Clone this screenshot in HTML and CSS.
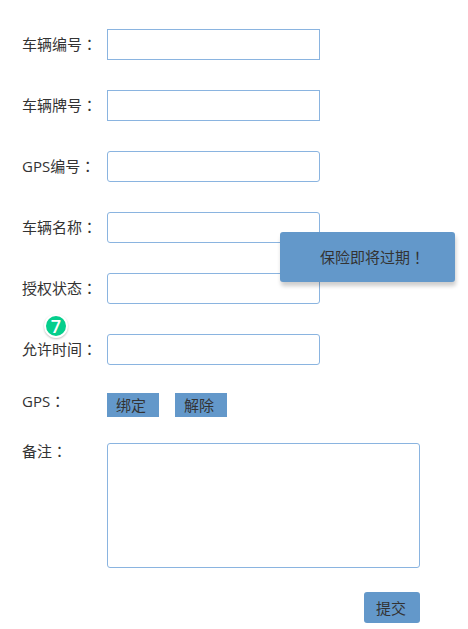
FILE: index.html
```html
<!DOCTYPE html>
<html lang="zh-CN">
<head>
<meta charset="utf-8">
<meta name="viewport" content="width=device-width, initial-scale=1">
<title>车辆信息</title>
<link rel="stylesheet" href="styles.css">
</head>
<body>
<form class="form">
  <div class="row">
    <label class="label" for="car-id">车辆编号<span class="mark" lang="zh-TW">：</span></label>
    <input class="field square" id="car-id" type="text">
  </div>
  <div class="row">
    <label class="label" for="plate">车辆牌号<span class="mark" lang="zh-TW">：</span></label>
    <input class="field square" id="plate" type="text">
  </div>
  <div class="row">
    <label class="label" for="gps-id">GPS编号<span class="mark" lang="zh-TW">：</span></label>
    <input class="field" id="gps-id" type="text">
  </div>
  <div class="row">
    <label class="label" for="car-name">车辆名称<span class="mark" lang="zh-TW">：</span></label>
    <input class="field" id="car-name" type="text">
  </div>
  <div class="row">
    <label class="label" for="auth">授权状态<span class="mark" lang="zh-TW">：</span></label>
    <input class="field" id="auth" type="text">
  </div>
  <div class="row">
    <label class="label" for="time">允许时间<span class="mark" lang="zh-TW">：</span></label>
    <input class="field" id="time" type="text">
    <span class="badge">7</span>
  </div>
  <div class="row top" role="group" aria-labelledby="gps">
    <span class="label" id="gps">GPS<span class="mark" lang="zh-TW">：</span></span>
    <div class="actions">
      <button class="button small" type="button">绑定</button>
      <button class="button small" type="button">解除</button>
    </div>
  </div>
  <div class="row top">
    <label class="label" for="note">备注<span class="mark" lang="zh-TW">：</span></label>
    <textarea class="field note" id="note"></textarea>
  </div>
  <div class="footer">
    <button class="button submit" type="submit">提交</button>
  </div>
</form>
<div class="toast" role="alert">保险即将过期<span class="mark" lang="zh-TW">！</span></div>
</body>
</html>
```

FILE: styles.css
```css
* {
  box-sizing: border-box;
}

body {
  position: relative;
  margin: 0;
  background: #fff;
  color: #333;
  font: 15px/20px "Open Sans", "Noto Sans CJK SC", sans-serif;
}

.form {
  display: flex;
  flex-direction: column;
  padding: 29px 48px 0 22px;
}

.row {
  position: relative;
  display: grid;
  grid-template-columns: 85px 1fr;
  align-items: center;
  margin-bottom: 30px;
}

.row.top {
  align-items: start;
  margin-bottom: 26px;
}

.row:has(.badge) {
  margin-bottom: 28px;
}

.row:has(.note) {
  margin-bottom: 24px;
}

.label {
  padding-bottom: 2px;
  white-space: nowrap;
}

.row.top .label {
  padding: 0;
  line-height: 16px;
}

.mark {
  font-family: "Noto Sans CJK TC", sans-serif;
}

.field {
  width: 68%;
  height: 31px;
  margin: 0;
  padding: 0 8px;
  border: 1px solid #8ab4e0;
  border-radius: 3px;
  background: #fff;
  color: inherit;
  font: inherit;
}

.field.square {
  border-radius: 0;
}

.field.note {
  display: block;
  width: 100%;
  height: 125px;
  padding: 8px;
  resize: none;
}

.actions {
  display: flex;
  gap: 16px;
}

.button {
  padding: 0;
  border: 0;
  background: #6398ca;
  color: #333;
  font: inherit;
}

.button.small {
  width: 52px;
  height: 24px;
  padding-right: 4px;
}

.button.submit {
  width: 56px;
  height: 31px;
  padding-right: 2px;
  border-radius: 3px;
}

.footer {
  display: flex;
  justify-content: flex-end;
}

.badge {
  position: absolute;
  top: -20px;
  left: 22px;
  width: 24px;
  height: 24px;
  border: 2px solid #fff;
  border-radius: 50%;
  background: #05ce8c;
  box-shadow: 0 1px 2px rgba(0, 0, 0, 0.25);
  color: #fff;
  font-size: 18px;
  font-weight: 600;
  text-align: center;
}

.toast {
  position: absolute;
  top: 232px;
  right: 13px;
  width: 175px;
  padding: 15px 0 15px 10px;
  border-radius: 3px;
  background: #6398ca;
  box-shadow: 1px 4px 4px rgba(0, 0, 0, 0.2);
  text-align: center;
}
```
